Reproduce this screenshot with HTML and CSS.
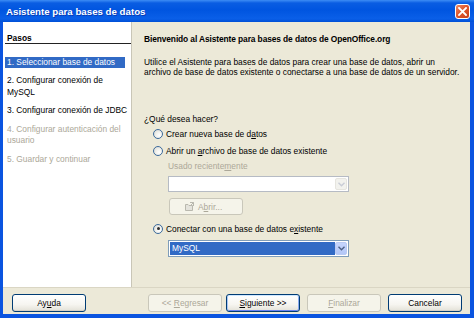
FILE: index.html
```html
<!DOCTYPE html>
<html lang="es">
<head>
<meta charset="utf-8">
<title>Asistente para bases de datos</title>
<link rel="stylesheet" href="styles.css">
</head>
<body>
<div class="window">
  <div class="titlebar">
    <span class="title">Asistente para bases de datos</span>
    <span class="close">
      <svg width="9" height="9" viewBox="0 0 9 9"><path d="M1 1 L8 8 M8 1 L1 8" stroke="#fff" stroke-width="1.8" stroke-linecap="square"/></svg>
    </span>
  </div>
  <div class="client">
    <div class="main">
      <aside class="steps">
        <div class="steps-head">Pasos</div>
        <ol class="step-list">
          <li class="step active">1. Seleccionar base de datos</li>
          <li class="step">2. Configurar conexión de<br>MySQL</li>
          <li class="step">3. Configurar conexión de JDBC</li>
          <li class="step disabled">4. Configurar autenticación del<br>usuario</li>
          <li class="step disabled">5. Guardar y continuar</li>
        </ol>
      </aside>
      <section class="content">
        <h1 class="heading">Bienvenido al Asistente para bases de datos de OpenOffice.org</h1>
        <p class="intro">Utilice el Asistente para bases de datos para crear una base de datos, abrir un<br>archivo de base de datos existente o conectarse a una base de datos de un servidor.</p>
        <div class="question">¿Qué desea hacer?</div>
        <div class="radio-row r1"><span class="radio"></span><span>Crear nueva base de d<u>a</u>tos</span></div>
        <div class="radio-row r2"><span class="radio"></span><span>Abrir un <u>a</u>rchivo de base de datos existente</span></div>
        <div class="sub">
          <div class="sub-label">Usado reciente<u>m</u>ente</div>
          <div class="combo disabled"><span class="combo-text"></span><span class="combo-btn"><svg width="7" height="5" viewBox="0 0 7 5"><path d="M0.5 0.8 L3.5 3.8 L6.5 0.8" fill="none" stroke="#C9CCD6" stroke-width="1.4"/></svg></span></div>
          <div class="open-btn">
            <svg class="open-icon" width="11" height="11" viewBox="0 0 11 11"><path d="M1.5 3.5 H4 L5 4.5 H8.5 V9.5 H1.5 Z" fill="#E4E3DC" stroke="#B9B8AE"/><path d="M6 1.5 H9.5 V5" fill="none" stroke="#B9B8AE"/><path d="M7 4 L9.5 1.5" stroke="#B9B8AE"/></svg>
            <span>A<u>b</u>rir...</span>
          </div>
        </div>
        <div class="radio-row r3"><span class="radio checked"></span><span>Conectar con una base de datos e<u>x</u>istente</span></div>
        <div class="sub">
          <div class="combo active"><span class="combo-text">MySQL</span><span class="combo-btn"><svg width="7" height="5" viewBox="0 0 7 5"><path d="M0.5 0.8 L3.5 3.8 L6.5 0.8" fill="none" stroke="#4D6185" stroke-width="1.4"/></svg></span></div>
        </div>
      </section>
    </div>
    <div class="footer">
      <span class="btn">Ay<u>u</u>da</span>
      <div class="nav">
        <span class="btn disabled">&lt;&lt;&nbsp;<u>R</u>egresar</span>
        <span class="btn default"><u>S</u>iguiente &gt;&gt;</span>
        <span class="btn disabled wide-gap"><u>F</u>inalizar</span>
        <span class="btn wide-gap">Cancelar</span>
      </div>
    </div>
  </div>
</div>
</body>
</html>
```
FILE: styles.css
```css
* { box-sizing: border-box; }
html, body { margin: 0; padding: 0; }
body {
  width: 474px;
  height: 318px;
  overflow: hidden;
  background: #0A54E0;
  font-family: "Liberation Sans", Arial, sans-serif;
  font-size: 8.4px;
  color: #000;
}
u { text-decoration: underline; text-underline-offset: 1px; }

.window {
  width: 474px;
  height: 318px;
  display: flex;
  flex-direction: column;
  background: #0A54E0;
}

.titlebar {
  height: 22px;
  flex: none;
  display: flex;
  align-items: center;
  justify-content: space-between;
  padding: 0 4px 0 6px;
  background: linear-gradient(#3D8DF5 0, #0A5DE2 3px, #0055E0 45%, #0A5FE8 85%, #0050D6 100%);
}
.title {
  color: #fff;
  font-weight: bold;
  font-size: 9.7px;
  text-shadow: 1px 1px 0 rgba(10, 24, 131, 0.5);
}
.close {
  width: 15px;
  height: 15px;
  border: 1px solid #fff;
  border-radius: 3px;
  background: linear-gradient(135deg, #EE8A66 0%, #E0572C 45%, #C8401A 100%);
  display: flex;
  align-items: center;
  justify-content: center;
}

.client {
  flex: 1;
  display: flex;
  flex-direction: column;
  margin: 0 4px 4px 3px;
  background: #ECE9D8;
}
.main {
  height: 265px;
  flex: none;
  display: flex;
}

.steps {
  width: 129px;
  flex: none;
  background: #fff;
  border-right: 1px solid #C9C6B7;
  padding: 11.5px 0 0 2px;
}
.steps-head {
  font-weight: bold;
  line-height: 9px;
  padding-left: 2px;
  border-bottom: 1px solid #222;
}
.step-list {
  list-style: none;
  margin: 13.5px 0 0;
  padding: 0;
}
.step {
  line-height: 11.5px;
  padding-left: 2px;
  margin-bottom: 7px;
  width: 120px;
  white-space: nowrap;
}
.step.active {
  background: #316AC5;
  color: #fff;
  line-height: 10.5px;
  margin-bottom: 7.5px;
}
.step.disabled { color: #ACA899; }

.content {
  flex: 1;
  padding: 11.5px 2px 0 12px;
}
.heading {
  margin: 0;
  font-size: 8.4px;
  font-weight: bold;
  line-height: 11px;
  letter-spacing: -0.1px;
}
.intro {
  margin: 12px 0 0;
  line-height: 10px;
  white-space: nowrap;
}
.question {
  margin-top: 37px;
  line-height: 11px;
}
.radio-row {
  display: flex;
  align-items: center;
  gap: 3px;
  height: 15px;
  margin-left: 9px;
  margin-top: 2px;
}
.radio-row.r3 { margin-top: 6px; }
.radio {
  width: 10px;
  height: 10px;
  border-radius: 50%;
  border: 1px solid #3B6A9C;
  background: radial-gradient(circle at 65% 65%, #FFFFFF 0%, #F2F2EE 40%, #D6D5CC 100%);
  position: relative;
  flex: none;
}
.radio.checked::after {
  content: "";
  position: absolute;
  left: 2.5px;
  top: 2.5px;
  width: 3px;
  height: 3px;
  border-radius: 50%;
  background: #2D2D2D;
}
.sub {
  margin-left: 24px;
}
.sub-label {
  color: #ACA899;
  margin-top: 2.5px;
  line-height: 11px;
}
.combo {
  width: 181px;
  height: 16px;
  margin-top: 4px;
  border: 1px solid #7F9DB9;
  background: #fff;
  display: flex;
  padding: 1px;
}
.combo.disabled { border-color: #B6BBC4; }
.combo.active { margin-top: 3.5px; height: 17px; }
.combo-text {
  flex: 1;
  line-height: 13px;
  padding-left: 2px;
}
.combo.active .combo-text {
  background: #316AC5;
  color: #fff;
}
.combo-btn {
  width: 12px;
  flex: none;
  border-radius: 2px;
  display: flex;
  align-items: center;
  justify-content: center;
  background: linear-gradient(#C6D5FC, #B3C7F7);
  border: 1px solid #B9CAF3;
}
.combo.disabled .combo-btn {
  background: #F2F2EE;
  border-color: #E6E5DF;
}
.open-btn {
  width: 74px;
  height: 17px;
  margin-top: 6px;
  margin-left: 1px;
  border: 1px solid #C9C7BA;
  border-radius: 3px;
  background: #F5F4EA;
  color: #ACA899;
  display: flex;
  align-items: center;
  gap: 3px;
  padding-left: 14px;
}

.footer {
  flex: 1;
  display: flex;
  align-items: flex-start;
  padding: 6px 8px 0 9px;
  border-top: 1px solid #DAD6C4;
}
.nav {
  margin-left: auto;
  display: flex;
  gap: 4px;
}
.btn {
  width: 74px;
  height: 18px;
  display: flex;
  align-items: center;
  justify-content: center;
  border: 1px solid #003C74;
  border-radius: 3px;
  background: linear-gradient(#FFFFFF 0%, #F6F5F0 60%, #E3E1D7 100%);
  box-shadow: inset 0 -1px 0 #D6D0C5;
}
.btn.default {
  box-shadow: inset 0 1px 0 #CEE7FF, inset 1px 0 0 #A8C6F5, inset -1px 0 0 #8AAAEF, inset 0 -1px 0 #6982EE;
}
.btn.disabled {
  border-color: #C9C7BA;
  background: #F5F4EA;
  color: #ACA899;
  box-shadow: none;
}
.btn.wide-gap { margin-left: 3px; }
```
